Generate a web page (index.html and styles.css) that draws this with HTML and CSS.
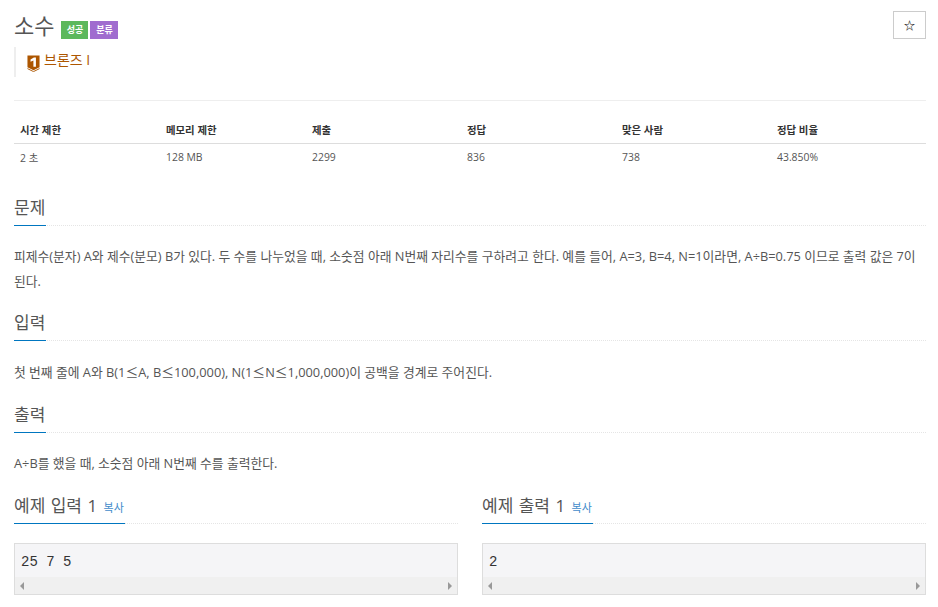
FILE: index.html
```html
<!DOCTYPE html>
<html lang="ko">
<head>
<meta charset="utf-8">
<title>소수</title>
<link rel="stylesheet" href="styles.css">
</head>
<body>
<div class="page">
  <header class="top">
    <div class="top-main">
      <div class="title-row">
        <h1 class="title">소수</h1>
        <span class="badges"><span class="badge badge-green">성공</span><span class="badge badge-purple">분류</span></span>
      </div>
      <div class="tier">
        <svg class="medal" width="13" height="17" viewBox="0 0 14 18">
          <path d="M0.5 0.5H13.5V13L7 16.2L0.5 13Z" fill="#ad5600"/>
          <path d="M0.5 14.5L7 17.7L13.5 14.5" fill="none" stroke="#ad5600" stroke-width="1"/>
          <path d="M3.8 4.6L7.4 2.6H9.6V12.4H6.9V5.8L3.8 7Z" fill="#fff"/>
        </svg>
        <span class="tier-name">브론즈 I</span>
      </div>
    </div>
    <button class="star-btn" type="button">☆</button>
  </header>

  <table class="info">
    <thead>
      <tr><th class="c16">시간 제한</th><th class="c16">메모리 제한</th><th class="c17">제출</th><th class="c17">정답</th><th class="c17">맞은 사람</th><th class="c17">정답 비율</th></tr>
    </thead>
    <tbody>
      <tr><td>2 초</td><td>128 MB</td><td>2299</td><td>836</td><td>738</td><td>43.850%</td></tr>
    </tbody>
  </table>

  <section class="sec sec-first">
    <h2 class="head"><span class="head-text">문제</span></h2>
    <p class="body-text">피제수(분자) A와 제수(분모) B가 있다. 두 수를 나누었을 때, 소숫점 아래 N번째 자리수를 구하려고 한다. 예를 들어, A=3, B=4, N=1이라면, A÷B=0.75 이므로 출력 값은 7이 된다.</p>
  </section>
  <section class="sec">
    <h2 class="head"><span class="head-text">입력</span></h2>
    <p class="body-text">첫 번째 줄에 A와 B(1<span class="le">≤</span>A, B<span class="le">≤</span>100,000), N(1<span class="le">≤</span>N<span class="le">≤</span>1,000,000)이 공백을 경계로 주어진다.</p>
  </section>
  <section class="sec">
    <h2 class="head"><span class="head-text">출력</span></h2>
    <p class="body-text">A÷B를 했을 때, 소숫점 아래 N번째 수를 출력한다.</p>
  </section>

  <div class="samples">
    <section class="sample">
      <h2 class="head"><span class="head-text">예제 입력 1 <a class="copy">복사</a></span></h2>
      <div class="code">
        <pre class="code-text">25 7 5</pre>
        <div class="scroll"><span class="arrow arrow-l"></span><span class="arrow arrow-r"></span></div>
      </div>
    </section>
    <section class="sample">
      <h2 class="head"><span class="head-text">예제 출력 1 <a class="copy">복사</a></span></h2>
      <div class="code">
        <pre class="code-text">2</pre>
        <div class="scroll"><span class="arrow arrow-l"></span><span class="arrow arrow-r"></span></div>
      </div>
    </section>
  </div>
</div>
</body>
</html>
```
FILE: styles.css
```css
* { box-sizing: border-box; }
html, body { margin: 0; padding: 0; background: #fff; overflow: hidden; }
body {
  height: 607px;
  font-family: "Open Sans", "Noto Sans CJK KR", sans-serif;
  font-size: 12px;
  color: #555;
}
.page { padding: 11px 12px 0 14px; }
.top { display: flex; justify-content: space-between; align-items: flex-start; height: 90px; border-bottom: 1px solid #eee; }
.title-row { display: flex; align-items: center; height: 28px; }
.title { margin: 0; font-size: 22px; font-weight: 400; line-height: 28px; color: #555; }
.badges { display: flex; gap: 2px; margin: 9px 0 0 7px; }
.badge { display: block; width: 27px; height: 18px; line-height: 18px; text-align: center; font-size: 9px; font-weight: 700; color: #fff; }
.badge-green { background: #5cb85c; }
.badge-purple { background: #a06ccf; width: 28px; }
.tier { display: flex; align-items: center; gap: 4px; height: 30px; margin-top: 8px; padding: 0 0 2px 11px; border-left: 2px solid #eee; }
.tier-name { font-size: 14px; color: #ad5600; line-height: 18px; margin-top: -3px; }
.medal { display: block; margin-top: 5px; }
.star-btn { width: 33px; height: 28px; padding: 0; background: #fff; border: 1px solid #ccc; font: 700 11px "Noto Sans CJK KR", sans-serif; color: #222; }
.info { width: 912px; margin-top: 18px; border-collapse: collapse; table-layout: fixed; font-size: 10.4px; }
.c16 { width: 146px; }
.c17 { width: 155px; }
.info th { height: 24px; padding: 0 6px 2px; text-align: left; font-weight: 700; color: #333; border-bottom: 1px solid #ddd; }
.info td { height: 28px; padding: 0 6px; color: #555; }
.sec-first { margin-top: 28px; }
.head { margin: 0; height: 27px; font-size: 17px; font-weight: 400; line-height: 18px; color: #555; border-bottom: 1px dotted #e5e5e5; }
.head-text { display: inline-block; height: 27px; padding: 0 1px 0 0; border-bottom: 1px solid #0076c0; }
.body-text { margin: 0 0 21px; padding: 18px 0 0; font-size: 12.8px; line-height: 25px; }
.sec-first .body-text { margin-bottom: 20px; }
.le { font-family: "Noto Sans CJK KR", sans-serif; }
.samples { display: grid; grid-template-columns: 444px 444px; gap: 24px; margin-top: 1px; }
.sample .head-text { word-spacing: 1px; }
.copy { font-size: 11px; color: #428bca; margin-left: 1px; word-spacing: 0; }
.code { margin-top: 19px; height: 52px; border: 1px solid #ddd; background: #f5f5f7; display: flex; flex-direction: column; }
.code-text { margin: 0; padding: 8px 6px 0; height: 33px; font: 14px/20px "Liberation Mono", monospace; color: #333; }
.scroll { height: 17px; background: #f0f0f0; display: flex; justify-content: space-between; align-items: center; padding: 0 5px; }
.arrow { width: 0; height: 0; border-top: 4px solid transparent; border-bottom: 4px solid transparent; }
.arrow-l { border-right: 4px solid #999; }
.arrow-r { border-left: 4px solid #999; }
```
